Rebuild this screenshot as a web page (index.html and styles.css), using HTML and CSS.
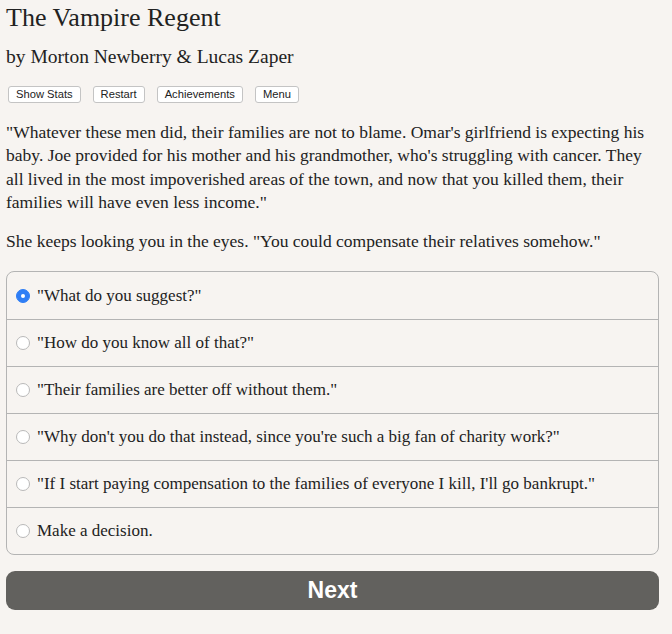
FILE: index.html
```html
<!DOCTYPE html>
<html>
<head>
<meta charset="utf-8">
<link rel="stylesheet" href="styles.css">
</head>
<body>
<div class="page">
  <h1 class="title">The Vampire Regent</h1>
  <h2 class="byline">by Morton Newberry &amp; Lucas Zaper</h2>
  <div class="toolbar">
    <button class="tbtn">Show Stats</button>
    <button class="tbtn">Restart</button>
    <button class="tbtn">Achievements</button>
    <button class="tbtn">Menu</button>
  </div>
  <p class="text">"Whatever these men did, their families are not to blame. Omar's girlfriend is expecting his baby. Joe provided for his mother and his grandmother, who's struggling with cancer. They all lived in the most impoverished areas of the town, and now that you killed them, their families will have even less income."</p>
  <p class="text">She keeps looking you in the eyes. "You could compensate their relatives somehow."</p>
  <div class="choices">
    <label class="choice"><span class="radio checked"></span>"What do you suggest?"</label>
    <label class="choice"><span class="radio"></span>"How do you know all of that?"</label>
    <label class="choice"><span class="radio"></span>"Their families are better off without them."</label>
    <label class="choice"><span class="radio"></span>"Why don't you do that instead, since you're such a big fan of charity work?"</label>
    <label class="choice"><span class="radio"></span>"If I start paying compensation to the families of everyone I kill, I'll go bankrupt."</label>
    <label class="choice"><span class="radio"></span>Make a decision.</label>
  </div>
  <button class="next">Next</button>
</div>
</body>
</html>
```
FILE: styles.css
```css
html, body {
  margin: 0;
  background: #f7f4f1;
}
.page {
  width: 653px;
  padding: 0 6px;
  font-family: "Liberation Serif", serif;
  color: #222;
}
.title {
  margin: 0;
  padding-top: 4px;
  font-size: 26px;
  font-weight: normal;
  line-height: 28px;
}
.byline {
  margin: 14px 0 0;
  font-size: 19.5px;
  font-weight: normal;
  line-height: 22px;
}
.toolbar {
  display: flex;
  gap: 12px;
  margin: 18px 0 0 2px;
}
.tbtn {
  font-family: "Liberation Sans", Arial, sans-serif;
  font-size: 11.2px;
  color: #222;
  background: #fff;
  border: 1px solid #c4c4c4;
  border-radius: 3px;
  height: 17px;
  padding: 0 7px;
  line-height: 15px;
}
.text {
  margin: 0;
  padding-top: 18px;
  font-size: 17.5px;
  line-height: 23.3px;
}
.text + .text {
  padding-top: 16px;
}
.choices {
  margin-top: 18px;
  border: 1px solid #b4b4b4;
  border-radius: 8px;
  display: flex;
  flex-direction: column;
}
.choice {
  display: flex;
  align-items: center;
  height: 46px;
  padding-left: 9px;
  font-size: 17px;
  border-top: 1px solid #b4b4b4;
}
.choice:first-child {
  border-top: none;
  height: 47px;
}
.radio {
  width: 12px;
  height: 12px;
  border-radius: 50%;
  border: 1px solid #b9b9b9;
  background: #fff;
  margin-right: 7px;
  box-sizing: content-box;
  flex: none;
  position: relative;
}
.radio.checked {
  background: #2f7ef5;
  border-color: #2f7ef5;
}
.radio.checked::after {
  content: "";
  position: absolute;
  left: 4px;
  top: 4px;
  width: 4px;
  height: 4px;
  border-radius: 50%;
  background: #fff;
}
.next {
  display: block;
  width: 100%;
  margin-top: 16px;
  height: 39px;
  border: none;
  border-radius: 9px;
  background: #62615e;
  color: #fff;
  font-family: "Liberation Sans", Arial, sans-serif;
  font-weight: bold;
  font-size: 23px;
}
```
